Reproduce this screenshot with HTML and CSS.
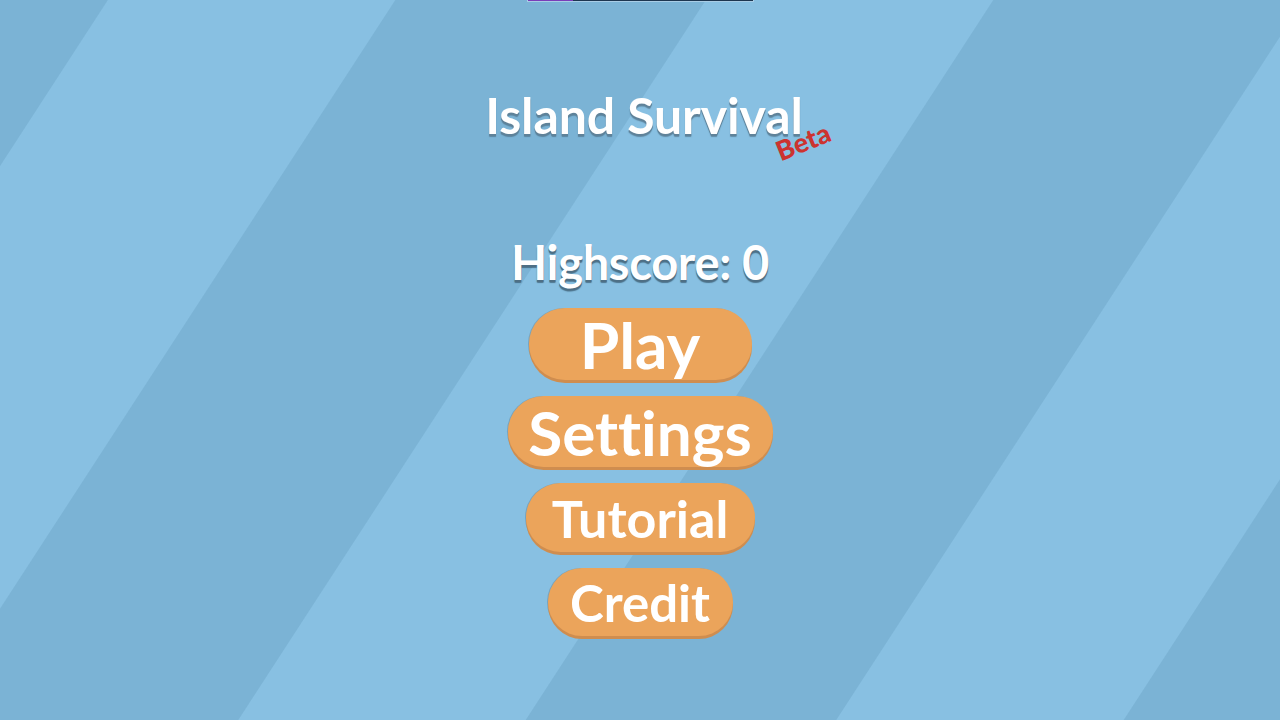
FILE: index.html
```html
<!DOCTYPE html>
<html>
<head>
<meta charset="utf-8">
<link rel="stylesheet" href="styles.css">
</head>
<body>
<div class="screen">
  <div class="loadbar"><div class="loadbar-fill"></div></div>
  <div class="title-wrap">
    <h1 class="title">Island Survival</h1>
    <span class="beta">Beta</span>
  </div>
  <div class="highscore">Highscore: 0</div>
  <div class="menu">
    <button class="btn btn-play">Play</button>
    <button class="btn btn-settings">Settings</button>
    <button class="btn btn-tutorial">Tutorial</button>
    <button class="btn btn-credit">Credit</button>
  </div>
</div>
</body>
</html>
```
FILE: styles.css
```css
html, body {
  margin: 0;
  padding: 0;
  width: 1280px;
  height: 720px;
  overflow: hidden;
}
body {
  font-family: Lato, "Noto Sans", sans-serif;
  font-variant-ligatures: none;
  background: repeating-linear-gradient(123deg,
    #7bb3d5 0px, #7bb3d5 90px,
    #88c0e2 91px, #88c0e2 331px,
    #7bb3d5 332px, #7bb3d5 501.5px);
}
.screen {
  width: 1280px;
  height: 720px;
  display: flex;
  flex-direction: column;
  align-items: center;
}
.loadbar {
  width: 225px;
  height: 2px;
  background: #1d3650;
  border: 1px solid #a9cde6;
  border-top: none;
  margin-top: -1px;
  display: flex;
}
.loadbar-fill {
  width: 45px;
  background: #7a3db8;
}
.title-wrap {
  position: relative;
  margin-top: 85px;
  margin-left: 8px;
}
.title {
  margin: 0;
  font-size: 50px;
  font-weight: 700;
  color: #ffffff;
  line-height: 56px;
  text-shadow: 0 2px 0 #5f8299, 0 3px 1px rgba(60, 90, 110, 0.5);
  letter-spacing: -0.1px;
}
.beta {
  position: absolute;
  left: 298px;
  top: 47px;
  font-size: 27px;
  font-weight: 900;
  color: #cc3330;
  transform: rotate(-22deg);
  transform-origin: left bottom;
}
.highscore {
  margin-top: 91px;
  font-size: 47px;
  font-weight: 700;
  color: #ffffff;
  line-height: 56px;
  text-shadow: 0 2px 0 #4e6f85, 0 3px 1px rgba(40, 70, 90, 0.6);
  letter-spacing: -0.3px;
}
.menu {
  margin-top: 18px;
  display: flex;
  flex-direction: column;
  align-items: center;
  gap: 16px;
}
.btn {
  font-family: Lato, "Noto Sans", sans-serif;
  font-variant-ligatures: none;
  font-weight: 700;
  color: #ffffff;
  background: #eba45b;
  border: none;
  border-radius: 36px;
  height: 70px;
  padding: 0;
  box-shadow: 0 3px 0 #cf8d4f, -1px 0 0 rgba(90, 110, 120, 0.35);
  display: flex;
  align-items: center;
  justify-content: center;
}
.btn-play {
  width: 223px;
  height: 72px;
  font-size: 64px;
}
.btn-settings {
  width: 265px;
  height: 71px;
  font-size: 62px;
}
.btn-tutorial {
  width: 229px;
  height: 69px;
  font-size: 52px;
}
.btn-credit {
  width: 185px;
  height: 68px;
  font-size: 51px;
}
```
